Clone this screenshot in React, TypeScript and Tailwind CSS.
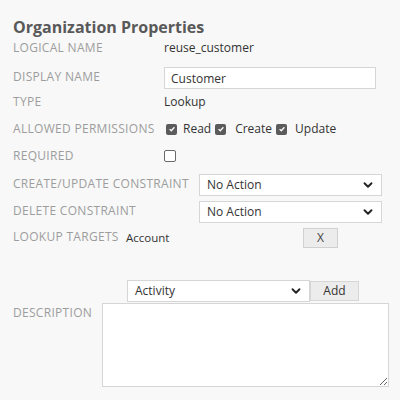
import { ChevronDown } from "lucide-react";

const font = { fontFamily: '"Open Sans", "Noto Sans", sans-serif' };

const Label = ({ text, className = "" }: { text: string; className?: string }) => (
  <span
    className={`shrink-0 whitespace-nowrap text-[12px] uppercase tracking-[0.3px] text-[#9d9d9d] ${className}`}
  >
    {text}
  </span>
);

const Check = ({ checked }: { checked: boolean }) =>
  checked ? (
    <span className="flex h-[11px] w-[11px] items-center justify-center rounded-[2px] bg-[#5b5b5b]">
      <svg viewBox="0 0 10 10" className="h-[8px] w-[8px]">
        <path d="M2 5.2 L4.1 7.2 L8 2.8" fill="none" stroke="#fff" strokeWidth="1.6" />
      </svg>
    </span>
  ) : (
    <span className="h-[12px] w-[12px] rounded-[2px] border border-[#6b6b6b] bg-white" />
  );

const Select = ({ value, className = "" }: { value: string; className?: string }) => (
  <div
    className={`flex h-[22px] items-center justify-between border border-[#d6d6d6] bg-white pl-[7px] pr-[6px] text-[12px] text-[#333] ${className}`}
  >
    <span>{value}</span>
    <ChevronDown className="h-[14px] w-[14px] text-[#222]" strokeWidth={3.2} />
  </div>
);

const App = () => {
  return (
    <div style={font} className="flex h-[400px] w-[400px] flex-col bg-[#f8f8f8] pl-[13px] pt-[16px]">
      <h1 className="h-[23px] text-[16px] font-bold leading-[23px] text-[#595959]">
        Organization Properties
      </h1>

      <div className="flex h-[18px] items-center">
        <Label text="Logical name" className="w-[151px]" />
        <span className="text-[12px] text-[#333]">reuse_customer</span>
      </div>

      <div className="mt-[10px] flex h-[22px] items-center">
        <Label text="Display name" className="w-[151px] -mt-[3px]" />
        <input
          defaultValue="Customer"
          className="h-[22px] w-[212px] border border-[#d6d6d6] bg-white px-[6px] text-[12px] text-[#333] outline-none"
        />
      </div>

      <div className="mt-[4px] flex h-[18px] items-center">
        <Label text="Type" className="w-[151px]" />
        <span className="text-[12px] text-[#333]">Lookup</span>
      </div>

      <div className="mt-[9px] flex h-[18px] items-center">
        <Label text="Allowed permissions" className="w-[153px]" />
        <div className="flex items-center text-[12px] text-[#333]">
          <Check checked />
          <span className="ml-[6px]">Read</span>
          <span className="ml-[4px]"><Check checked /></span>
          <span className="ml-[9px]">Create</span>
          <span className="ml-[4px]"><Check checked /></span>
          <span className="ml-[8px]">Update</span>
        </div>
      </div>

      <div className="mt-[9px] flex h-[18px] items-center">
        <Label text="Required" className="w-[151px]" />
        <Check checked={false} />
      </div>

      <div className="mt-[9px] flex h-[22px] items-center">
        <Label text="Create/Update constraint" className="w-[186px] -mt-[3px]" />
        <Select value="No Action" className="w-[183px]" />
      </div>

      <div className="mt-[5px] flex h-[22px] items-center">
        <Label text="Delete constraint" className="w-[186px] -mt-[3px]" />
        <Select value="No Action" className="w-[183px]" />
      </div>

      <div className="mt-[5px] flex h-[20px] items-center">
        <Label text="Lookup targets" className="w-[113px] -mt-[3px]" />
        <span className="w-[177px] text-[11.5px] text-[#333]">Account</span>
        <button className="flex h-[20px] w-[35px] items-center justify-center border border-[#d0d0d0] bg-[#ececec] text-[12px] text-[#444]">
          X
        </button>
      </div>

      <div className="mt-[32px] flex h-[22px] items-center pl-[114px]">
        <Select value="Activity" className="w-[183px]" />
        <button className="flex h-[20px] w-[49px] items-center justify-center border border-[#d6d6d6] bg-[#ececec] text-[12px] text-[#333]">
          Add
        </button>
      </div>

      <div className="mt-[1px] flex items-start">
        <Label text="Description" className="w-[89px] pt-[1px]" />
        <textarea className="h-[84px] w-[287px] border border-[#d6d6d6] bg-white p-[4px] text-[12px] outline-none" />
      </div>
    </div>
  );
};

export default App;
